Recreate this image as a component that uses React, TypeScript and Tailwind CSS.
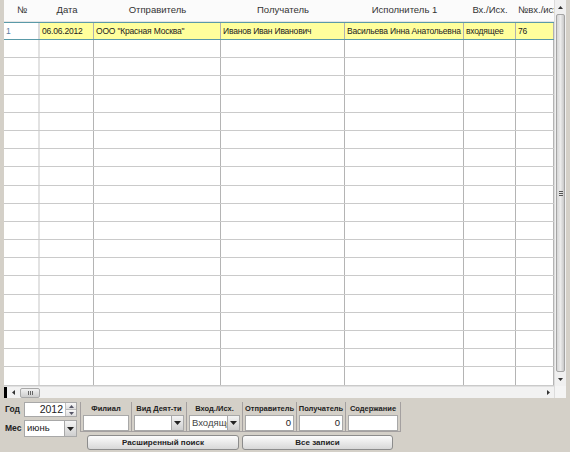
import React from 'react';

const cols = [
  { title: '№', w: 36 },
  { title: 'Дата', w: 54 },
  { title: 'Отправитель', w: 127 },
  { title: 'Получатель', w: 124 },
  { title: 'Исполнитель 1', w: 119 },
  { title: 'Вх./Исх.', w: 52 },
  { title: '№вх./исх.', w: 38 },
];

const firstRow = ['1', '06.06.2012', 'ООО "Красная Москва"', 'Иванов Иван Иванович', 'Васильева Инна Анатольевна', 'входящее', '76'];

const font = { fontFamily: '"Liberation Sans", Arial, sans-serif' };

function DownArrow() {
  return (
    <svg width="7" height="4" viewBox="0 0 7 4">
      <path d="M0 0h7L3.5 4z" fill="#222" />
    </svg>
  );
}

function DropButton() {
  return (
    <div className="w-[12px] h-full flex items-center justify-center bg-gradient-to-b from-[#f4f4f4] to-[#cfcfcf] border-l border-[#a8a8a8]">
      <DownArrow />
    </div>
  );
}

function Grid() {
  return (
    <div className="flex w-[562px] h-[398px] bg-white">
      <div className="flex flex-col w-[550px]">
        <div className="h-[386px] overflow-hidden">
          {/* header */}
          <div className="flex h-[22px] bg-[#fbfbfb] border-b border-[#e4e4e4]">
            {cols.map((c, i) => (
              <div
                key={i}
                style={{ width: c.w }}
                className={
                  'flex items-center text-[9.5px] text-[#333] whitespace-nowrap overflow-hidden ' +
                  (i === cols.length - 1 ? 'justify-start pl-[2px]' : 'justify-center')
                }
              >
                {c.title}
              </div>
            ))}
          </div>
          {/* first row */}
          <div className="flex h-[18px] border-y border-[#5a9aa8] bg-[#ffff9c]">
            {firstRow.map((t, i) => (
              <div
                key={i}
                style={{ width: cols[i].w }}
                className={
                  'flex items-center pl-[2px] text-[8.5px] tracking-[-0.2px] whitespace-nowrap overflow-hidden ' +
                  (i === 0
                    ? 'bg-white text-[#5c7ca0] border-r-2 border-[#dcdcdc]'
                    : 'text-[#222] border-r border-[#b0b0b0]')
                }
              >
                {t}
              </div>
            ))}
          </div>
          {Array.from({ length: 20 }).map((_, r) => (
            <div key={r} className="flex h-[18.2px] border-b border-[#cacaca]">
              {cols.map((c, i) => (
                <div
                  key={i}
                  style={{ width: c.w }}
                  className={i === 0 ? 'border-r-2 border-[#e2e2e2]' : 'border-r border-[#b4b4b4]'}
                />
              ))}
            </div>
          ))}
        </div>
        {/* horizontal scrollbar */}
        <div className="flex items-center h-[12px] bg-[#f2f2f2] border-t border-[#e0e0e0]">
          <div className="w-[3px] h-full bg-black" />
          <div className="w-[13px] flex items-center justify-center">
            <svg width="3" height="5" viewBox="0 0 3 5">
              <path d="M3 0v5L0 2.5z" fill="#333" />
            </svg>
          </div>
          <div className="w-[20px] h-[10px] rounded-[2px] border border-[#a8a8a8] bg-gradient-to-b from-[#f2f2f2] to-[#cdcdcd] flex items-center justify-center gap-[1px]">
            <div className="w-px h-[4px] bg-[#666]" />
            <div className="w-px h-[4px] bg-[#666]" />
            <div className="w-px h-[4px] bg-[#666]" />
          </div>
          <div className="flex-1" />
          <div className="w-[12px] flex items-center justify-center">
            <svg width="3" height="5" viewBox="0 0 3 5">
              <path d="M0 0v5L3 2.5z" fill="#333" />
            </svg>
          </div>
        </div>
      </div>
      {/* vertical scrollbar */}
      <div className="flex flex-col w-[12px] bg-[#f0f0f0] border-l border-[#dcdcdc]">
        <div className="h-[14px] flex items-center justify-center">
          <svg width="5" height="3" viewBox="0 0 5 3">
            <path d="M0 3h5L2.5 0z" fill="#333" />
          </svg>
        </div>
        <div className="h-[358px] mx-[1px] rounded-[2px] border border-[#a4a4a4] bg-gradient-to-r from-[#d6d6d6] via-[#ececec] to-[#c8c8c8] flex flex-col items-center justify-center gap-[1px]">
          <div className="w-[4px] h-px bg-[#555]" />
          <div className="w-[4px] h-px bg-[#555]" />
          <div className="w-[4px] h-px bg-[#555]" />
        </div>
        <div className="h-[14px] flex items-center justify-center">
          <svg width="5" height="3" viewBox="0 0 5 3">
            <path d="M0 0h5L2.5 3z" fill="#333" />
          </svg>
        </div>
        <div className="flex-1 bg-[#f4f4f4]" />
      </div>
    </div>
  );
}

const groups = [
  { label: 'Филиал', w: 51, kind: 'input', value: '' },
  { label: 'Вид Деят-ти', w: 55, kind: 'select', value: '' },
  { label: 'Вход./Исх.', w: 56, kind: 'select', value: 'Входящее' },
  { label: 'Отправитель', w: 54, kind: 'input', value: '0' },
  { label: 'Получатель', w: 49, kind: 'input', value: '0' },
  { label: 'Содержание', w: 55, kind: 'input', value: '' },
];

function Filters() {
  return (
    <div className="flex pl-[5px] pt-[4px]">
      {/* year / month */}
      <div className="flex flex-col w-[75px] gap-[3px]">
        <div className="flex items-center h-[15px]">
          <span className="w-[19px] text-[8.5px] font-bold text-[#222]">Год</span>
          <div className="flex w-[53px] h-[15px] bg-white border border-[#a8a8a8]">
            <div className="flex-1 flex items-center justify-end pr-[2px] text-[10.5px] text-[#222]">2012</div>
            <div className="w-[11px] flex flex-col border-l border-[#c0c0c0]">
              <div className="flex-1 flex items-center justify-center bg-gradient-to-b from-[#f8f8f8] to-[#dedede] border-b border-[#b8b8b8]">
                <svg width="5" height="3" viewBox="0 0 5 3"><path d="M0 3h5L2.5 0z" fill="#556" /></svg>
              </div>
              <div className="flex-1 flex items-center justify-center bg-gradient-to-b from-[#f8f8f8] to-[#dedede]">
                <svg width="5" height="3" viewBox="0 0 5 3"><path d="M0 0h5L2.5 3z" fill="#556" /></svg>
              </div>
            </div>
          </div>
        </div>
        <div className="flex items-center h-[17px]">
          <span className="w-[19px] text-[8.5px] font-bold text-[#222]">Мес</span>
          <div className="flex w-[53px] h-[17px] bg-white border border-[#a8a8a8]">
            <div className="flex-1 flex items-center pl-[2px] text-[9.5px] text-[#222]">июнь</div>
            <DropButton />
          </div>
        </div>
      </div>
      {/* group box + buttons */}
      <div className="flex flex-col">
        <div className="flex h-[30px] border-l border-b border-[#a4a0a0]">
          {groups.map((g, i) => (
            <div
              key={i}
              style={{ width: g.w }}
              className="flex flex-col items-center border-r border-[#a4a0a0] px-[2px]"
            >
              <div className="h-[13px] flex items-center text-[7.5px] font-bold text-[#222] whitespace-nowrap">
                {g.label}
              </div>
              <div className="flex w-full h-[17px] bg-white border border-[#a8a8a8] overflow-hidden">
                <div
                  className={
                    'flex-1 flex items-center text-[9.5px] whitespace-nowrap overflow-hidden ' +
                    (g.kind === 'input' ? 'justify-end pr-[2px] text-[#222]' : 'pl-[2px] text-[#444]')
                  }
                >
                  {g.value}
                </div>
                {g.kind === 'select' && <DropButton />}
              </div>
            </div>
          ))}
        </div>
        <div className="flex gap-[3px] pl-[7px] pt-[3px]">
          <button className="w-[152px] h-[15px] rounded-[3px] border border-[#8c8c8c] bg-gradient-to-b from-[#fcfcfc] to-[#d8d8d8] text-[8px] font-bold text-[#222]">
            Расширенный поиск
          </button>
          <button className="w-[151px] h-[15px] rounded-[3px] border border-[#8c8c8c] bg-gradient-to-b from-[#fcfcfc] to-[#d8d8d8] text-[8px] font-bold text-[#222]">
            Все записи
          </button>
        </div>
      </div>
    </div>
  );
}

export default function App() {
  return (
    <div style={font} className="w-[570px] h-[452px] bg-[#d4d0c8] overflow-hidden">
      <div className="pl-[4px]">
        <Grid />
      </div>
      <Filters />
    </div>
  );
}
